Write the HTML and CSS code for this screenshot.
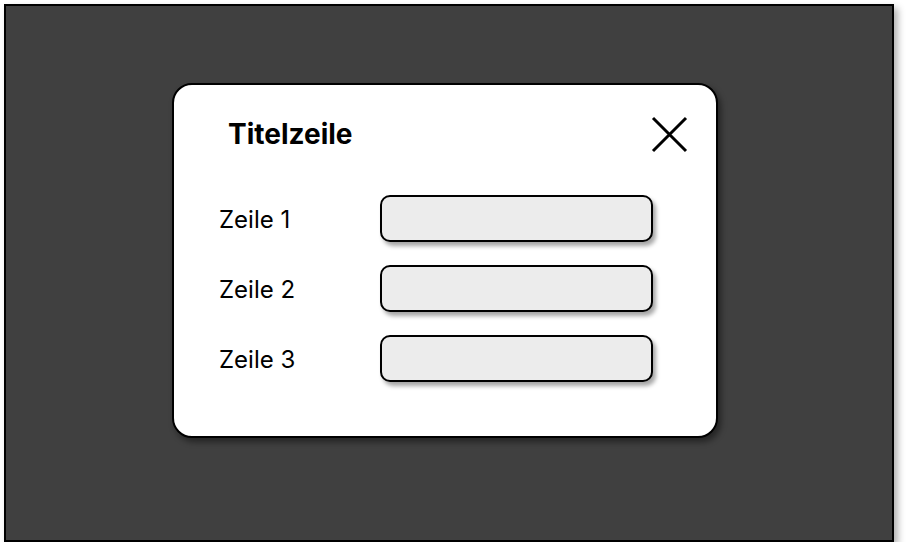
FILE: index.html
```html
<!DOCTYPE html>
<html lang="de">
<head>
<meta charset="utf-8">
<title>Dialog</title>
<link rel="stylesheet" href="styles.css">
</head>
<body>
<div class="frame">
  <div class="dialog">
    <div class="header">
      <h1 class="title">Titelzeile</h1>
      <svg class="close" width="37" height="37" viewBox="0 0 37 37"><path d="M2 2 L35 35 M35 2 L2 35" stroke="#000" stroke-width="3" fill="none"/></svg>
    </div>
    <div class="rows">
      <div class="row"><span class="label">Zeile 1</span><div class="field"></div></div>
      <div class="row"><span class="label">Zeile 2</span><div class="field"></div></div>
      <div class="row"><span class="label">Zeile 3</span><div class="field"></div></div>
    </div>
  </div>
</div>
</body>
</html>
```
FILE: styles.css
```css
html, body { margin: 0; padding: 0; background: #fff; }
body { font-family: "Inter", "Noto Sans", sans-serif; color: #000; }
.frame {
  margin: 4px 0 0 4px;
  border: 2px solid #000;
  background: #404040;
  box-shadow: 4px 4px 7px rgba(0,0,0,0.3);
  padding: 77px 0 0 166px;
  box-sizing: content-box;
  width: 720px;
  height: 457px;
}
.dialog {
  width: 542px;
  height: 351px;
  background: #fff;
  border: 2px solid #000;
  border-radius: 20px;
  box-shadow: 3px 4px 6px rgba(0,0,0,0.45);
}
.header {
  display: flex;
  align-items: flex-start;
  justify-content: space-between;
  padding: 31px 28px 0 54px;
  height: 74px;
  box-sizing: border-box;
}
.title {
  margin: 2px 0 0 0;
  font-size: 28px;
  font-weight: 700;
  line-height: 32px;
}
.close { display: block; }
.rows {
  display: flex;
  flex-direction: column;
  gap: 23px;
  padding: 36px 0 0 45px;
}
.row { display: flex; align-items: center; height: 47px; }
.label { width: 161px; font-size: 24px; padding-top: 2px; }
.field {
  width: 269px;
  height: 43px;
  background: #ececec;
  border: 2px solid #000;
  border-radius: 10px;
  box-shadow: 3px 4px 4px rgba(0,0,0,0.35);
}
```
